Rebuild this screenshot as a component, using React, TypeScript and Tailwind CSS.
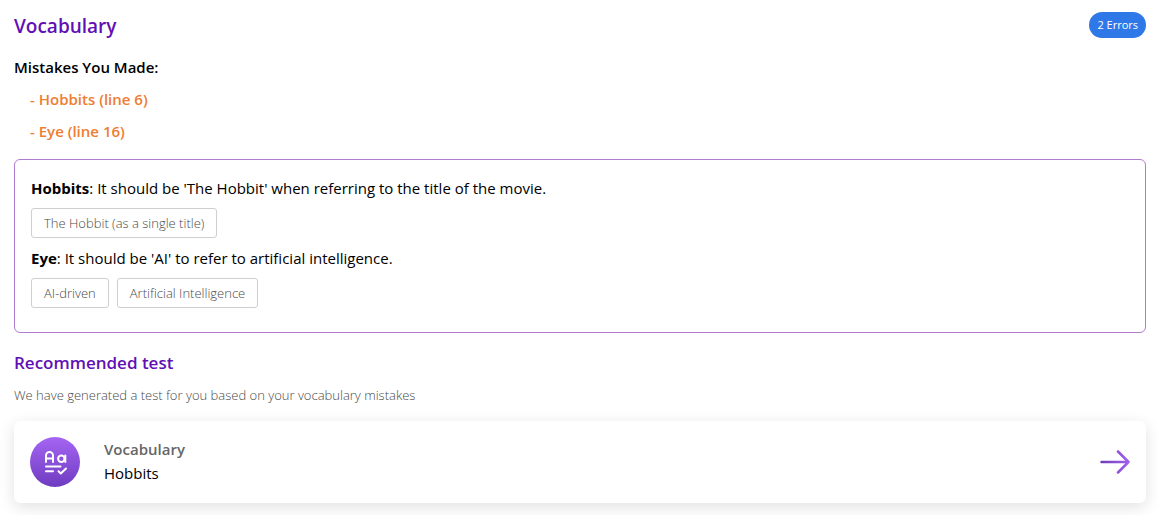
type Mistake = {
  word: string;
  line: number;
  explanation: string;
  suggestions: string[];
};

const mistakes: Mistake[] = [
  {
    word: "Hobbits",
    line: 6,
    explanation: "It should be 'The Hobbit' when referring to the title of the movie.",
    suggestions: ["The Hobbit (as a single title)"],
  },
  {
    word: "Eye",
    line: 16,
    explanation: "It should be 'AI' to refer to artificial intelligence.",
    suggestions: ["AI-driven", "Artificial Intelligence"],
  },
];

function VocabularyIcon() {
  return (
    <svg width="50" height="50" viewBox="0 0 50 50" fill="none" className="shrink-0" aria-hidden="true">
      <defs>
        <linearGradient id="badge" x1="25" y1="0" x2="25" y2="50" gradientUnits="userSpaceOnUse">
          <stop stopColor="#a565f3" />
          <stop offset="1" stopColor="#6f3cc0" />
        </linearGradient>
      </defs>
      <circle cx="25" cy="25" r="25" fill="url(#badge)" />
      <g stroke="#fff" strokeWidth="2" strokeLinecap="round" strokeLinejoin="round">
        <path d="M16 25v-6.5a3.5 3.5 0 0 1 7 0V25M16 21.5h7" />
        <circle cx="31.3" cy="21.7" r="3.2" />
        <path d="M35.3 18.5V25" />
        <path d="M16 29.5h14.5M16 34.3h7M28.5 34.3l2.3 2.2 5.2-5" />
      </g>
    </svg>
  );
}

function ArrowIcon() {
  return (
    <svg width="30" height="24" viewBox="0 0 30 24" fill="none" className="shrink-0" aria-hidden="true">
      <defs>
        <linearGradient id="arrow" x1="0" y1="12" x2="30" y2="12" gradientUnits="userSpaceOnUse">
          <stop stopColor="#6f3cb4" />
          <stop offset="1" stopColor="#a262f2" />
        </linearGradient>
      </defs>
      <path
        d="M1.5 12H28.5M18 1.5L28.5 12L18 22.5"
        stroke="url(#arrow)"
        strokeWidth="2.5"
        strokeLinecap="round"
        strokeLinejoin="round"
      />
    </svg>
  );
}

export default function App() {
  return (
    <main className="bg-white py-3 pr-3 pl-3.5 font-['Open_Sans',sans-serif] text-[15px] leading-6 text-black">
      <div className="flex items-start justify-between">
        <h1 className="text-[19px] leading-7 font-semibold text-[#620fb5]">Vocabulary</h1>
        <span className="rounded-full bg-[#2f78e8] px-2 text-[11px] leading-[26px] text-white">
          {mistakes.length} Errors
        </span>
      </div>

      <h2 className="mt-[15px] font-semibold">Mistakes You Made:</h2>
      <ul className="mt-2 space-y-2 pl-4 font-semibold text-[#ee7d32]">
        {mistakes.map((m) => (
          <li key={m.word}>
            - {m.word} (line {m.line})
          </li>
        ))}
      </ul>

      <section className="mt-4 rounded-md border border-[#b07cd0] p-4">
        {mistakes.map((m) => (
          <div key={m.word} className="mb-2">
            <p>
              <strong className="font-bold">{m.word}</strong>: {m.explanation}
            </p>
            <div className="mt-2 flex flex-wrap gap-2">
              {m.suggestions.map((s) => (
                <button
                  key={s}
                  type="button"
                  className="rounded-[3px] border border-[#cfcfcf] px-3 text-[13px] leading-7 font-light text-[#4a4a4a]"
                >
                  {s}
                </button>
              ))}
            </div>
          </div>
        ))}
      </section>

      <h2 className="mt-4 text-[17px] leading-7 font-semibold text-[#620fb5]">Recommended test</h2>
      <p className="mt-2 text-[13px] leading-5 font-light text-[#4a4a4a]">
        We have generated a test for you based on your vocabulary mistakes
      </p>

      <a href="#test" className="mt-4 flex items-center rounded-md bg-white p-4 shadow-[0_4px_16px_rgba(0,0,0,0.12)]">
        <VocabularyIcon />
        <div className="ml-6 flex-1 pb-0.5">
          <div className="font-semibold text-[#666]">Vocabulary</div>
          <div>Hobbits</div>
        </div>
        <ArrowIcon />
      </a>
    </main>
  );
}
